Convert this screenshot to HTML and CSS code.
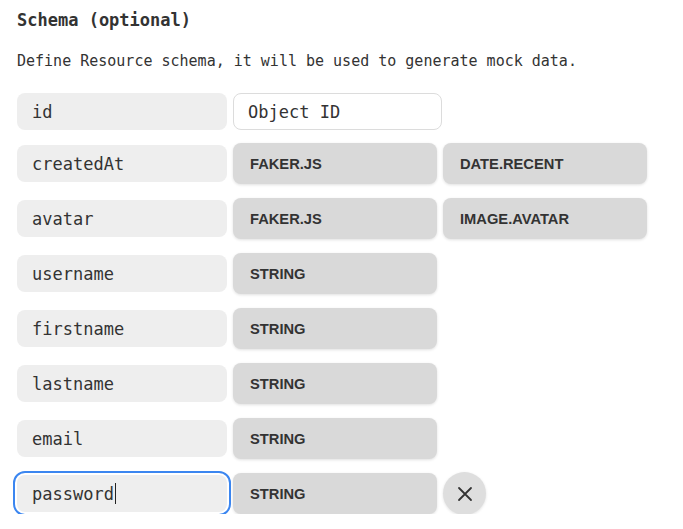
FILE: index.html
```html
<!DOCTYPE html>
<html>
<head>
<meta charset="utf-8">
<link rel="stylesheet" href="styles.css">
</head>
<body>
<div class="panel">
  <h2 class="title">Schema (optional)</h2>
  <p class="desc">Define Resource schema, it will be used to generate mock data.</p>
  <div class="rows">
    <div class="row row-id">
      <div class="field">id</div>
      <div class="value">Object ID</div>
    </div>
    <div class="row">
      <div class="field">createdAt</div>
      <div class="btn">FAKER.JS</div>
      <div class="btn">DATE.RECENT</div>
    </div>
    <div class="row">
      <div class="field">avatar</div>
      <div class="btn">FAKER.JS</div>
      <div class="btn">IMAGE.AVATAR</div>
    </div>
    <div class="row">
      <div class="field">username</div>
      <div class="btn">STRING</div>
    </div>
    <div class="row">
      <div class="field">firstname</div>
      <div class="btn">STRING</div>
    </div>
    <div class="row">
      <div class="field">lastname</div>
      <div class="btn">STRING</div>
    </div>
    <div class="row">
      <div class="field">email</div>
      <div class="btn">STRING</div>
    </div>
    <div class="row">
      <div class="field focused">password<span class="caret"></span></div>
      <div class="btn">STRING</div>
      <div class="close">
        <svg width="16" height="16" viewBox="0 0 16 16"><path d="M2 2 L14 14 M14 2 L2 14" stroke="#333" stroke-width="1.8" fill="none" stroke-linecap="round"/></svg>
      </div>
    </div>
  </div>
</div>
</body>
</html>
```
FILE: styles.css
```css
html, body {
  margin: 0;
  padding: 0;
  background: #ffffff;
}
.panel {
  padding: 10px 17px 0 17px;
  font-family: "DejaVu Sans Mono", monospace;
  color: #333;
}
.title {
  margin: 0;
  font-size: 17px;
  line-height: 20px;
  font-weight: bold;
  color: #333;
}
.desc {
  margin: 21px 0 0 0;
  font-size: 15px;
  line-height: 20px;
  color: #333;
}
.rows {
  margin-top: 22px;
  display: flex;
  flex-direction: column;
  gap: 14px;
}
.row {
  display: flex;
  align-items: center;
  gap: 6px;
  height: 41px;
}
.row-id {
  height: 37px;
  margin-bottom: -1px;
}
.field {
  box-sizing: border-box;
  width: 210px;
  height: 37px;
  border-radius: 8px;
  background: #eeeeee;
  padding: 0 15px;
  display: flex;
  align-items: center;
  font-size: 17px;
  color: #333;
}
.field.focused {
  outline: 2px solid #3b86f0;
  outline-offset: 2px;
}
.caret {
  display: inline-block;
  width: 1px;
  height: 21px;
  background: #222;
  margin-left: 1px;
}
.value {
  box-sizing: border-box;
  width: 209px;
  height: 37px;
  border-radius: 8px;
  background: #fff;
  border: 1.5px solid #dcdcdc;
  padding: 0 14px;
  display: flex;
  align-items: center;
  font-size: 17px;
  color: #333;
}
.btn {
  box-sizing: border-box;
  width: 204px;
  height: 41px;
  border-radius: 8px;
  background: #d9d9d9;
  box-shadow: 0 1px 3px rgba(0,0,0,0.12);
  padding: 0 17px;
  display: flex;
  align-items: center;
  font-family: "Liberation Sans", Arial, sans-serif;
  font-weight: bold;
  font-size: 14.7px;
  color: #333;
}
.close {
  width: 43px;
  height: 43px;
  border-radius: 50%;
  background: #dedede;
  box-shadow: 0 1px 3px rgba(0,0,0,0.12);
  display: flex;
  align-items: center;
  justify-content: center;
}
```
